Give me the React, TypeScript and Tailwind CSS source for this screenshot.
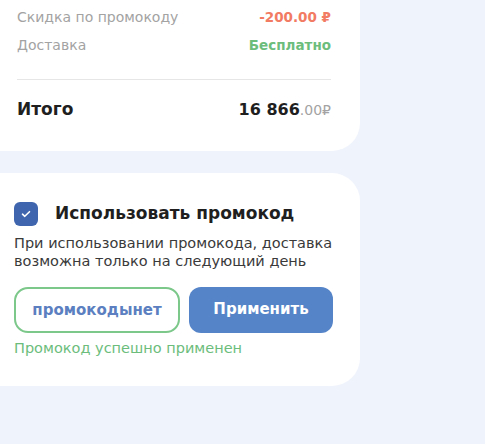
import { useState } from 'react'

export default function App() {
  const [usePromo, setUsePromo] = useState(true)
  const [code, setCode] = useState('промокодынет')

  return (
    <div className="min-h-[444px] w-[485px] bg-[#eff3fb] font-['DejaVu_Sans',sans-serif]">
      {/* итоги заказа */}
      <div className="w-[360px] rounded-br-[28px] bg-white pl-[17px] pr-[29px] pt-[3px] pb-[12px]">
        <div className="flex h-[28px] items-center justify-between text-[13.5px]">
          <span className="text-[14px] text-[#a3a3a3]">Скидка по промокоду</span>
          <span className="font-bold text-[#f27b63]">-200.00 ₽</span>
        </div>
        <div className="flex h-[28px] items-center justify-between text-[13.5px]">
          <span className="text-[14px] text-[#a3a3a3]">Доставка</span>
          <span className="font-bold text-[#6cbd7c]">Бесплатно</span>
        </div>
        <div className="mt-[20px] h-px bg-[#e6e6e6]" />
        <div className="flex h-[59px] items-center justify-between">
          <span className="text-[17px] font-bold text-[#1f1f1f]">Итого</span>
          <span className="text-[16px] font-bold text-[#1f1f1f]">
            16 866<span className="text-[14px] font-normal text-[#a3a3a3]">.00₽</span>
          </span>
        </div>
      </div>

      {/* промокод */}
      <div className="mt-[22px] w-[360px] rounded-r-[28px] bg-white pl-[14px] pr-[27px] pt-[28px] pb-[27px]">
        <label className="flex cursor-pointer items-center gap-[17px]">
          <input
            type="checkbox"
            checked={usePromo}
            onChange={(e) => setUsePromo(e.target.checked)}
            className="hidden"
          />
          <span className="flex h-[24px] w-[24px] items-center justify-center rounded-[6px] bg-[#3e65ad]">
            {usePromo && (
              <svg width="10" height="8" viewBox="0 0 10 8" fill="none">
                <path d="M1.5 4.2 3.8 6.3 8.5 1.7" stroke="white" strokeWidth="1.6" strokeLinecap="round" strokeLinejoin="round" />
              </svg>
            )}
          </span>
          <span className="text-[17px] font-semibold text-[#1f1f1f]">Использовать промокод</span>
        </label>
        <p className="mt-[7px] text-[14.5px] leading-[18px] text-[#3a3a3a]">
          При использовании промокода, доставка
          <br />
          возможна только на следующий день
        </p>
        <div className="mt-[17px] flex gap-[9px]">
          <input
            value={code}
            onChange={(e) => setCode(e.target.value)}
            className="h-[46px] w-[166px] rounded-[14px] border-2 border-[#7cc78a] bg-white text-center text-[15px] font-semibold text-[#5b7fc0] outline-none"
          />
          <button className="h-[46px] w-[146px] rounded-[12px] bg-[#5584c8] text-[15px] font-bold text-white">
            Применить
          </button>
        </div>
        <p className="mt-[5px] text-[14.5px] text-[#6cbd7c]">Промокод успешно применен</p>
      </div>
    </div>
  )
}
